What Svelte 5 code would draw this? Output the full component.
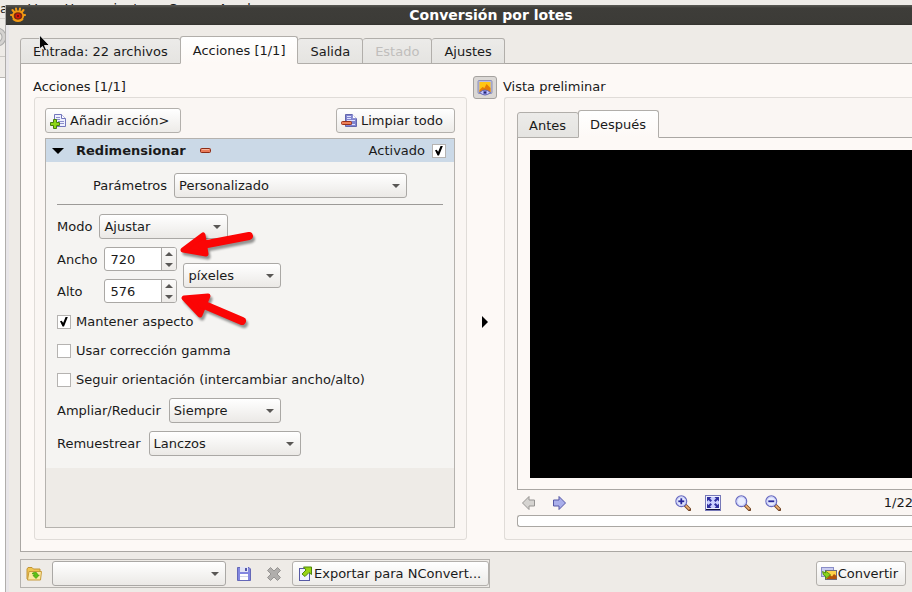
<script>
  let width = $state(720);
  let height = $state(576);
  let enabled = $state(true);
  let keepRatio = $state(true);
  let gamma = $state(false);
  let orientation = $state(false);
  const tabs = [
    { label: 'Entrada: 22 archivos' },
    { label: 'Acciones [1/1]', selected: true },
    { label: 'Salida' },
    { label: 'Estado', disabled: true },
    { label: 'Ajustes' }
  ];
</script>

{#snippet combo(id, label, value, kind)}
  <span class="combo {kind}">
    <select {id} aria-label={label}><option>{value}</option></select>
  </span>
{/snippet}

{#snippet lens(kind, label)}
  <button class="tool" aria-label={label}>
    <svg width="16" height="16" viewBox="0 0 16 16">
      <path d="M10.500 10.500l4 4" stroke="#6f4020" stroke-width="3.400" stroke-linecap="round" />
      <path d="M10.500 10.300l4 4" stroke="#eeb070" stroke-width="1.700" />
      <circle cx="6.300" cy="6.300" r="5.400" fill="#e9edff" stroke="#6769c0" stroke-width="1.200" />
      <circle cx="6.300" cy="6.300" r="4.300" fill="none" stroke="#c6ccf5" stroke-width="1" />
      {#if kind !== 'plain'}<path d="M3.300 6.300h6" stroke="#26269a" stroke-width="1.800" />{/if}
      {#if kind === 'in'}<path d="M6.300 3.300v6" stroke="#26269a" stroke-width="1.800" />{/if}
    </svg>
  </button>
{/snippet}

{#snippet spin(id, value, change)}
  <span class="spin">
    <input {id} type="text" inputmode="numeric" {value} onchange={(e) => change(Number(e.currentTarget.value))} />
    <span class="steps">
      <button aria-label="Aumentar" onclick={() => change(value + 1)}><i class="up"></i></button>
      <button aria-label="Disminuir" onclick={() => change(value - 1)}><i class="down"></i></button>
    </span>
  </span>
{/snippet}

<div class="desktop">
  <div class="parent">
    <div class="menu"><span>ar</span><span>Ver</span><span>Herramientas</span><span>Crear</span><span>Ayuda</span></div>
    <div class="parent-tool">
      <svg width="18" height="20" viewBox="0 0 18 20"><circle cx="8" cy="10" r="7" fill="none" stroke="#aaa" stroke-width="5" /><circle cx="8" cy="10" r="7" fill="none" stroke="#d4d2d0" stroke-width="3" /></svg>
    </div>
    <div class="parent-bar"></div>
    <div class="parent-view"></div>
  </div>

  <div class="window">
    <header class="title">
      <svg width="16" height="16" viewBox="0 0 16 16">
        <path d="M2.500 3l2.500 3M6 1.500l.6 4M10 1.500l-.6 4M13.500 3l-2.500 3M1 8l3 .5M15 8l-3 .5" stroke="#f39a12" stroke-width="2" stroke-linecap="round" />
        <ellipse cx="8" cy="9" rx="5.200" ry="4.600" fill="#7c2a10" stroke="#f39a12" stroke-width="1.800" />
        <path d="M3 12q5 4 10 0" fill="none" stroke="#f39a12" stroke-width="2" />
        <circle cx="8" cy="9" r="2.500" fill="#d81808" />
        <circle cx="8" cy="9" r="1" fill="#5c0c06" />
      </svg>
      <h1>Conversión por lotes</h1>
    </header>

    <div class="content">
      <div class="tabs" role="tablist">
        {#each tabs as t}
          <button role="tab" class="tab" class:selected={t.selected} aria-selected={!!t.selected} disabled={t.disabled}>{t.label}</button>
        {/each}
      </div>

      <main class="page">
        <section class="actions">
          <h2>Acciones [1/1]</h2>
          <div class="group">
            <div class="row between">
              <button class="btn add">
                <svg width="16" height="16" viewBox="0 0 16 16">
                  <path d="M4.500 1.500h7l4 4v8h-11z" fill="#eef0ff" stroke="#7276bb" />
                  <path d="M11.500 1.500v4h4" fill="#fff" stroke="#7276bb" />
                  <path d="M6 4.500h4M6 6.500h4M8 8.500h6M8 10.500h6" stroke="#8d91cb" />
                  <path d="M3.500 6.500h3v3h3v3h-3v3h-3v-3h-3v-3h3z" fill="#8ed615" stroke="#477f0c" />
                </svg>
                Añadir acción&gt;
              </button>
              <button class="btn clear">
                <svg width="16" height="16" viewBox="0 0 16 16">
                  <path d="M4.500 1.500h7l4 4v8h-11z" fill="#8185d0" stroke="#6367ac" />
                  <path d="M11.500 1v4.500h4" fill="#fff" stroke="#8d91d2" />
                  <path d="M6 3.500h4M6 5.500h4M6 7.500h8M11 11.500h3" stroke="#dfe2ff" />
                  <rect x="0.500" y="8.500" width="10" height="3" rx="1" fill="#ed8059" stroke="#9c3118" />
                </svg>
                Limpiar todo
              </button>
            </div>

            <div class="list">
              <div class="item-head">
                <button class="expand" aria-label="Contraer"><svg width="12" height="6" viewBox="0 0 12 6"><path d="M0 0h12L6 6z" /></svg></button>
                <strong>Redimensionar</strong>
                <button class="remove" aria-label="Quitar acción"><svg width="11" height="5" viewBox="0 0 11 5"><rect x="0.500" y="0.500" width="10" height="4" rx="1" fill="#e97b5a" stroke="#8c2c16" /><path d="M2 1.500h7" stroke="#f7b49c" /></svg></button>
                <label class="active">Activado <input type="checkbox" bind:checked={enabled} /></label>
              </div>

              <div class="item-body">
                <div class="row center">
                  <label for="preset">Parámetros</label>{@render combo('preset', null, 'Personalizado', 'w-preset')}
                </div>
                <hr />
                <div class="row">
                  <label for="mode">Modo</label>{@render combo('mode', null, 'Ajustar', 'w-mode')}
                </div>
                <div class="row size">
                  <div class="fields">
                    <label for="w">Ancho</label>{@render spin('w', width, (v) => (width = v))}
                    <label for="h">Alto</label>{@render spin('h', height, (v) => (height = v))}
                  </div>
                  {@render combo('unit', 'Unidad', 'píxeles', 'w-unit')}
                </div>
                <div class="checks">
                  <label><input type="checkbox" bind:checked={keepRatio} />Mantener aspecto</label>
                  <label><input type="checkbox" bind:checked={gamma} />Usar corrección gamma</label>
                  <label><input type="checkbox" bind:checked={orientation} />Seguir orientación (intercambiar ancho/alto)</label>
                </div>
                <div class="row wide">
                  <label for="grow">Ampliar/Reducir</label>{@render combo('grow', null, 'Siempre', 'w-grow')}
                </div>
                <div class="row wide last">
                  <label for="resample">Remuestrear</label>{@render combo('resample', null, 'Lanczos', 'w-resample')}
                </div>

                <svg class="marks" width="80" height="100" viewBox="0 0 80 100">
                  <g fill="#fb0505" stroke="#fb0505" stroke-linejoin="round" stroke-linecap="round">
                    <path d="M5 21L25 6L28 25Z" stroke-width="5" />
                    <path d="M24 16L71 7" stroke-width="8" />
                    <path d="M6 69L30 67L22 86Z" stroke-width="5" />
                    <path d="M24 75L64 92" stroke-width="8" />
                  </g>
                </svg>
              </div>
            </div>
          </div>
        </section>

        <div class="splitter">
          <button class="toggle" aria-label="Vista preliminar">
            <svg width="16" height="16" viewBox="0 0 16 16">
              <rect x="1" y="0.500" width="14" height="13" rx="1" fill="#b9bbdf" stroke="#8d90b8" />
              <rect x="2.500" y="2" width="11" height="10" fill="#ffc514" />
              <path d="M2.500 10l3-3 2 1 2-4 4 4v4h-11z" fill="#e47b08" />
              <path d="M2.500 12.500q5.500-5 11 0q-5.500 5-11 0z" fill="#c4c6fa" stroke="#6265af" />
              <circle cx="8" cy="12.500" r="2" fill="#6a6dcc" /><circle cx="8" cy="12.500" r="1" fill="#25255e" />
            </svg>
          </button>
          <button class="handle" aria-label="Ocultar vista"><svg width="6" height="12" viewBox="0 0 6 12"><path d="M0 0v12L6 6z" /></svg></button>
        </div>

        <section class="preview">
          <h2>Vista preliminar</h2>
          <div class="group">
            <div class="tabs" role="tablist">
              <button role="tab" class="tab" aria-selected="false">Antes</button>
              <button role="tab" class="tab selected" aria-selected="true">Después</button>
            </div>
            <div class="view"><div class="image"></div></div>
            <div class="viewbar">
              <button class="tool" aria-label="Anterior"><svg width="16" height="16" viewBox="0 0 16 16"><path d="M1.500 8L8 1.500v3.500h5.500v6H8v3.500z" fill="#d5d3d0" stroke="#969492" /></svg></button>
              <button class="tool" aria-label="Siguiente"><svg width="16" height="16" viewBox="0 0 16 16"><path d="M14.500 8L8 1.500v3.500H2.500v6H8v3.500z" fill="#a9aeea" stroke="#5557a5" /></svg></button>
              <span class="zoom">
                {@render lens('in', 'Acercar')}
                <button class="tool" aria-label="Ajustar a la ventana">
                  <svg width="16" height="16" viewBox="0 0 16 16">
                    <rect x="0.500" y="0.500" width="15" height="15" fill="#eef0ff" stroke="#7779b8" />
                    <rect x="2" y="2" width="12" height="11" fill="#cbd0ff" />
                    <path d="M2 2h4.500L5 3.500l2 2-1.500 1.500-2-2L2 6.500zM14 2H9.500L11 3.500l-2 2 1.500 1.500 2-2L14 6.500zM2 13h4.500L5 11.500l2-2L5.500 8l-2 2L2 8.500zM14 13H9.500l1.500-1.500-2-2L10.500 8l2 2L14 8.500z" fill="#3030a0" />
                    <path d="M1 14.500h14" stroke="#101038" />
                  </svg>
                </button>
                {@render lens('plain', 'Tamaño real')}
                {@render lens('out', 'Alejar')}
              </span>
              <span class="count">1/22</span>
            </div>
            <div class="progress" role="progressbar" aria-label="Progreso"></div>
          </div>
        </section>
      </main>

      <footer>
        <div class="script">
          <button class="tool" aria-label="Abrir">
            <svg width="16" height="16" viewBox="0 0 16 16">
              <path d="M1 13V3l1-1.500h4L7.500 3H14v10z" fill="#f0c552" stroke="#c29536" />
              <path d="M1.500 14L3 5.500h12.500L14.500 14z" fill="#fdeaa0" stroke="#c89c3c" />
              <path d="M6.500 7q5-2 5 2h1.800L10 12.500 7 9.500h1.700Q8.700 7.500 6.500 8z" fill="#5fc412" stroke="#3f9a10" stroke-width=".7" />
            </svg>
          </button>
          {@render combo('script', 'Guion', '', 'w-script')}
          <button class="tool" aria-label="Guardar">
            <svg width="16" height="16" viewBox="0 0 16 16">
              <path d="M1.500 1.500h11.500l1.500 1.500v11.500h-13z" fill="#8387e0" stroke="#6568b8" />
              <rect x="4" y="1" width="8" height="5" fill="#e2e4f4" /><rect x="9" y="2" width="2" height="3" fill="#5356a6" />
              <rect x="4" y="8" width="8" height="6" fill="#fff" /><path d="M4 10.500h8" stroke="#d3d5ec" />
            </svg>
          </button>
          <button class="tool" aria-label="Eliminar">
            <svg width="16" height="16" viewBox="0 0 16 16"><path d="M4.500 1.500L8 5l3.500-3.500 3 3L11 8l3.500 3.500-3 3L8 11l-3.500 3.500-3-3L5 8 1.500 4.500z" fill="#b0aeac" stroke="#969492" stroke-linejoin="round" /></svg>
          </button>
          <button class="btn export">
            <svg width="16" height="16" viewBox="0 0 16 16">
              <rect x="2.500" y="2.500" width="10" height="12" fill="#f2f3ff" stroke="#5659a4" />
              <path d="M6.500 1h8v7.500l-2.500-2L8 10.500 5 8 9 4z" fill="#98d413" stroke="#4f860c" />
            </svg>
            Exportar para NConvert...
          </button>
        </div>
        <button class="btn convert">
          <svg width="16" height="16" viewBox="0 0 16 16">
            <rect x="0.500" y="1.500" width="12" height="9" fill="#c9ccf0" stroke="#8a8dc8" />
            <rect x="4.500" y="4.500" width="11" height="9" fill="#ffd24a" stroke="#6e6a80" />
            <path d="M5 13l4-4 2 1.500L13 8l2.500 2v3z" fill="#b5530b" />
            <path d="M1.500 5.500l3 1.500V5l5 3.800-5 3.700v-2.300Q2 10 1.500 5.500z" fill="#8ad21c" stroke="#468c0c" stroke-width=".8" />
          </svg>
          Convertir
        </button>
      </footer>
    </div>
  </div>

  <svg class="cursor" width="13" height="19" viewBox="0 0 13 19">
    <path d="M1.500 1v14l3-2.500 2 4.500 2-1-2-4.500h5z" fill="#080808" stroke="#fff" stroke-width=".8" />
  </svg>
</div>

<style>
  :global(body) { background: #eeebe7; }
  .desktop { position: relative; height: 100vh; min-height: 592px; overflow: hidden; font: 13px/15px "DejaVu Sans", sans-serif; color: #1a1a1a; }
  .desktop * { box-sizing: border-box; }
  button, select, input { font: inherit; color: inherit; margin: 0; }
  button { background: none; border: 0; padding: 0; }
  h1, h2 { margin: 0; font-size: 13px; line-height: 15px; }
  h2 { font-weight: normal; }
  svg { display: block; flex: none; fill-rule: evenodd; }

  .parent { display: flex; flex-direction: column; height: 100%; background: #eeebe7; }
  .menu { display: flex; gap: 15px; height: 19px; padding-top: 1px; border-bottom: 1px solid #d2cfcb; white-space: nowrap; }
  .parent-tool { height: 38px; padding-top: 8px; border-bottom: 1px solid #cbc8c4; }
  .parent-tool svg { margin-left: -11px; }
  .parent-bar { height: 21px; border-bottom: 1px solid #b9b6b2; }
  .parent-view { flex: 1; background: #fff; }

  .window { position: absolute; inset: 5px 0 0 5px; z-index: 1; display: flex; flex-direction: column; border-left: 1px solid #b0aeac; background: #eeebe7; overflow: hidden; }
  .title { display: flex; align-items: center; height: 20px; margin-left: -1px; padding-left: 5px; background: linear-gradient(#5a5954, #3e3d39 15%, #3c3b37 90%, #33322e); color: #fff; }
  .title h1 { flex: 1; padding-left: 44px; font-size: 14px; text-align: center; }
  .content { flex: 1; display: flex; flex-direction: column; padding: 11px 0 4px 11px; border-left: 3px solid #e8e6e9; }

  .tabs { display: flex; align-items: flex-end; position: relative; z-index: 1; margin-bottom: -1px; }
  .tab { height: 26px; padding: 0 12px; border: 1px solid #b1aeaa; border-left-width: 0; border-radius: 3px 3px 0 0; background: linear-gradient(#ecebe9, #e5e4e1); white-space: nowrap; }
  .tab:first-child { border-left-width: 1px; }
  .tab:disabled { color: #c0bebc; }
  .tab.selected { height: 28px; margin-left: -1px; border-left-width: 1px; border-bottom-color: #fdf9f6; background: linear-gradient(#fff, #fdf9f6); }
  .preview .tab { padding-left: 11px; }

  .page { flex: 1; display: flex; border: solid #aaa7a3; border-width: 1px 0 1px 1px; background: #fdf9f6; padding: 15px 0 11px 13px; min-height: 0; }
  .actions { flex: 0 0 433px; display: flex; flex-direction: column; }
  .actions h2 { margin-left: -1px; }
  .preview { flex: 1; min-width: 0; display: flex; flex-direction: column; }
  .preview h2 { margin-left: -1px; }
  .group { flex: 1; display: flex; flex-direction: column; margin-top: 3px; border: 1px solid #e0dcd8; border-radius: 3px; background: #faf6f3; }
  .actions .group { padding: 10px 11px 11px 10px; }
  .preview .group { border-right: 0; border-radius: 3px 0 0 3px; padding: 12px 0 12px 12px; }

  .row { display: flex; align-items: center; gap: 7px; }
  .wide { gap: 8px; }
  .between { justify-content: space-between; }
  .center { justify-content: center; }
  .btn { display: flex; align-items: center; gap: 1px; height: 25px; padding: 0 7px 0 4px; border: 1px solid #b3b0ac; border-radius: 3px; background: linear-gradient(#fff, #edebe8); white-space: nowrap; }
  .add { padding-right: 11px; gap: 4px; }
  .clear { padding-right: 11px; gap: 4px; }

  .list { flex: 1; margin-top: 5px; border: 1px solid #b5b2ae; background: #eeebe7; }
  .item-head { display: flex; align-items: center; height: 23px; padding: 0 8px 0 6px; background: #cbd9e7; }
  .expand { margin-right: 12px; }
  .remove { margin-left: 14px; }
  .active { display: flex; align-items: center; gap: 7px; margin-left: auto; }

  .item-body { position: relative; padding: 11px 11px 12px; background: #f5f4f2; }
  hr { margin: 6px 0 9px; border: 0; border-top: 1px solid #9c9a98; }
  .size { gap: 6px; margin: 8px 0 11px; }
  .fields { display: grid; grid-template-columns: auto auto; gap: 8px 7px; align-items: center; }
  .checks { display: flex; flex-direction: column; gap: 14px; margin-bottom: 11px; }
  .checks label { display: flex; align-items: center; gap: 5px; height: 15px; }
  .last { margin-top: 8px; }

  input[type='checkbox'] { appearance: none; position: relative; flex: none; width: 14px; height: 14px; border: 1px solid #b5b3b1; background: #fff; }
  input[type='checkbox']:checked::after { content: ''; position: absolute; inset: 1px 2px; background: #000; clip-path: polygon(0 48%, 20% 42%, 40% 62%, 72% 0, 100% 0, 50% 100%, 32% 100%); }

  .combo { position: relative; display: block; height: 25px; }
  .combo::after { content: ''; position: absolute; right: 7px; top: 11px; border: solid transparent; border-width: 4px 4px 0; border-top-color: #595755; pointer-events: none; }
  .combo select { appearance: none; display: block; width: 100%; height: 25px; padding: 0 20px 0 4px; border: 1px solid #aaa8a5; border-radius: 3px; background: linear-gradient(#fff, #ebe9e6); }
  .w-preset { width: 233px; }
  .w-mode { width: 129px; }
  .w-unit { width: 98px; }
  .w-grow { width: 112px; }
  .w-resample { width: 152px; }
  .w-script { width: 174px; }

  .spin { display: flex; width: 73px; height: 24px; border: 1px solid #aaa8a5; border-radius: 3px; overflow: hidden; background: #fff; }
  .spin input { flex: 1; min-width: 0; padding: 0 5px; border: 0; background: none; outline: 0; }
  .steps { display: flex; flex-direction: column; width: 15px; border-left: 1px solid #aaa8a5; background: linear-gradient(#fbfaf9, #edebe8); }
  .steps button { flex: 1; display: grid; place-items: center; }
  .steps i { border: solid transparent; border-width: 0 4px; }
  .steps .up { border-bottom: 4px solid #595755; }
  .steps .down { border-top: 4px solid #595755; }

  .marks { position: absolute; left: 132px; top: 67px; overflow: visible; filter: drop-shadow(2px 3px 1px rgba(0, 0, 0, .4)); pointer-events: none; }

  .splitter { flex: 0 0 37px; display: flex; flex-direction: column; align-items: center; margin-top: -3px; padding-right: 2px; }
  .toggle { display: grid; place-items: center; width: 24px; height: 23px; border: 1px solid #a5a29f; border-radius: 3px; background: #dbd8d5; }
  .handle { flex: 1; display: grid; place-items: center; padding-top: 4px; }

  .view { flex: 1; display: flex; padding: 12px 0 11px 12px; border: solid #aaa7a3; border-width: 1px 0 1px 1px; background: #fdf9f6; }
  .image { flex: 1; background: #000; }
  .viewbar { display: flex; align-items: center; gap: 14px; height: 25px; padding-left: 4px; }
  .tool { display: block; }
  .zoom { display: flex; gap: 14px; margin: 0 auto; padding-left: 6px; }
  .count { margin-right: -1px; }
  .progress { height: 12px; border: 1px solid #aaa7a3; border-right: 0; border-radius: 3px 0 0 3px; background: #fff; }

  footer { display: flex; align-items: center; justify-content: space-between; margin-top: 7px; padding-right: 6px; }
  .script { display: flex; align-items: center; height: 29px; padding: 0 0 0 5px; border: 1px solid #b5b2ae; }
  .script .combo { margin: 0 10px; }
  .script .tool + .tool { margin: 0 10px 0 14px; }

  .cursor { position: absolute; left: 38px; top: 34px; z-index: 2; }
</style>
